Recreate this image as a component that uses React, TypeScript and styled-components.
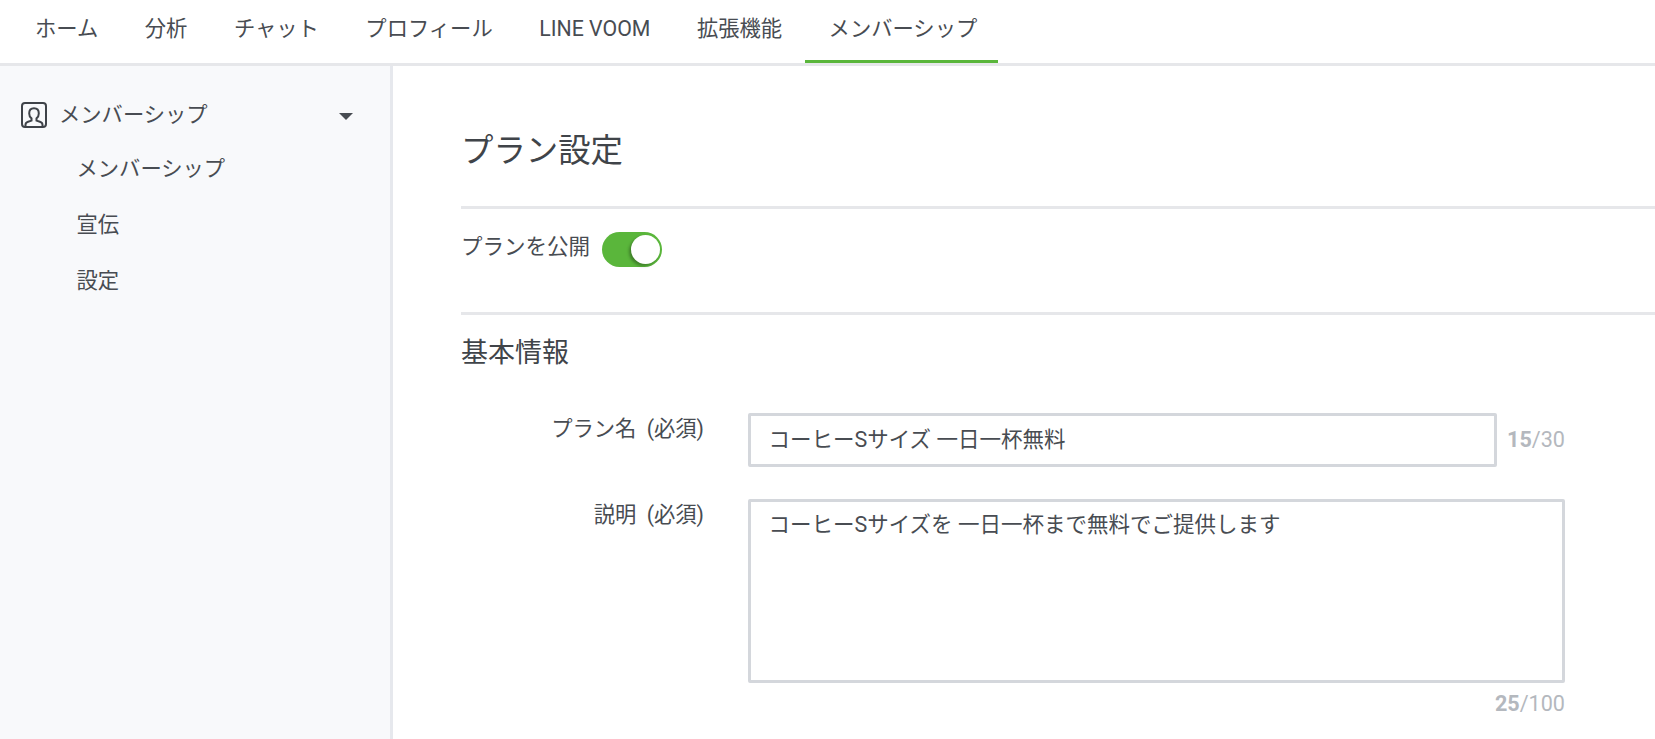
import styled, { createGlobalStyle } from 'styled-components';

const Colors = {
	text: '#484c52',
	heading: '#404449',
	border: '#e6e7ea',
	sideBorder: '#e6e8ed',
	field: '#d4d7dc',
	counter: '#b4b8be',
	green: '#5ab63b',
	sidebar: '#f8f9fb',
};

const GlobalStyle = createGlobalStyle`
	html, body {
		margin: 0;
		padding: 0;
		height: 100%;
		background: #fff;
		overflow: hidden;
	}
	body {
		font-family: Roboto, "Noto Sans CJK JP", sans-serif;
		color: ${Colors.text};
	}
`;

const tabs = ['ホーム', '分析', 'チャット', 'プロフィール', 'LINE VOOM', '拡張機能', 'メンバーシップ'];

export default function App() {
	return (
		<Page>
			<GlobalStyle />
			<TopNav>
				{tabs.map((tab, i) => (
					<Tab key={tab} $active={i === tabs.length - 1}>
						{tab}
					</Tab>
				))}
			</TopNav>
			<Body>
				<Sidebar>
					<SideHeader>
						<svg width="26" height="26" viewBox="0 0 26 26" fill="none" stroke="#3f4349" strokeWidth="2">
							<rect x="1" y="1" width="24" height="24" rx="3" />
							<path d="M4.5 25v-2.200c0-1.600 1-2.600 2.600-3.100l3.400-1.100v-2.200c-1.400-1-2.300-2.700-2.300-4.900 0-3.200 2-5.200 4.800-5.200s4.800 2 4.800 5.200c0 2.200-.9 3.900-2.300 4.900v2.200l3.400 1.100c1.600.5 2.600 1.500 2.600 3.100V25" />
						</svg>
						<SideTitle>メンバーシップ</SideTitle>
						<Caret />
					</SideHeader>
					<SideItem>メンバーシップ</SideItem>
					<SideItem>宣伝</SideItem>
					<SideItem>設定</SideItem>
				</Sidebar>
				<Main>
					<Title>プラン設定</Title>
					<PublishRow>
						<span>プランを公開</span>
						<Toggle />
					</PublishRow>
					<Section>
						<SectionTitle>基本情報</SectionTitle>
						<FieldRow>
							<FieldLabel>プラン名 (必須)</FieldLabel>
							<InputBox>コーヒーSサイズ 一日一杯無料</InputBox>
							<InlineCounter>
								<b>15</b>/30
							</InlineCounter>
						</FieldRow>
						<AreaRow>
							<FieldLabel>説明 (必須)</FieldLabel>
							<div>
								<AreaBox>コーヒーSサイズを 一日一杯まで無料でご提供します</AreaBox>
								<AreaCounter>
									<b>25</b>/100
								</AreaCounter>
							</div>
						</AreaRow>
					</Section>
				</Main>
			</Body>
		</Page>
	);
}

const Page = styled.div`
	height: 739px;
	display: flex;
	flex-direction: column;
	overflow: hidden;
	font-size: 21.3px;
`;

const TopNav = styled.nav`
	flex: none;
	height: 63px;
	box-sizing: content-box;
	padding-left: 11px;
	display: flex;
	border-bottom: 3px solid ${Colors.border};
`;

const Tab = styled.div<{ $active?: boolean }>`
	height: 63px;
	box-sizing: border-box;
	padding: 9px ${(p) => (p.$active ? '20.5px' : '22.5px')} 0 24px;
	line-height: 40px;
	white-space: nowrap;
	border-bottom: 3px solid ${(p) => (p.$active ? Colors.green : 'transparent')};
`;

const Body = styled.div`
	flex: 1;
	display: flex;
	min-height: 0;
`;

const Sidebar = styled.aside`
	flex: none;
	width: 393px;
	box-sizing: border-box;
	padding: 34px 0 0 21px;
	background: ${Colors.sidebar};
	border-right: 3px solid ${Colors.sideBorder};
`;

const SideHeader = styled.div`
	display: flex;
	align-items: center;
	height: 30px;
	margin-bottom: 19px;
`;

const SideTitle = styled.span`
	margin-left: 12px;
	line-height: 30px;
`;

const Caret = styled.i`
	margin: 2px 37px 0 auto;
	width: 0;
	height: 0;
	border-left: 7.5px solid transparent;
	border-right: 7.5px solid transparent;
	border-top: 7.5px solid ${Colors.text};
`;

const SideItem = styled.div`
	padding-left: 55.5px;
	height: 56px;
	line-height: 40px;
`;

const Main = styled.main`
	flex: 1;
	min-width: 0;
	padding-left: 68px;
`;

const Title = styled.h1`
	margin: 0;
	height: 143px;
	box-sizing: border-box;
	padding-top: 63px;
	font-size: 32.4px;
	font-weight: 400;
	line-height: 44px;
	color: ${Colors.heading};
	border-bottom: 3px solid ${Colors.border};
`;

const PublishRow = styled.div`
	height: 106px;
	box-sizing: border-box;
	padding-top: 22px;
	display: flex;
	align-items: flex-start;
	gap: 12px;
	line-height: 32px;
	border-bottom: 3px solid ${Colors.border};

	span {
		font-size: 21.5px;
	}
`;

const Toggle = styled.div`
	position: relative;
	width: 60px;
	height: 35px;
	margin-top: 1px;
	border-radius: 18px;
	background: ${Colors.green};

	&::after {
		content: '';
		position: absolute;
		top: 3px;
		right: 2px;
		width: 29px;
		height: 29px;
		border-radius: 50%;
		background: #fff;
		box-shadow: -2px 2px 3px rgba(0, 0, 0, 0.3);
	}
`;

const Section = styled.section`
	padding-top: 18px;
`;

const SectionTitle = styled.h2`
	margin: 0 0 40px;
	font-size: 27px;
	font-weight: 400;
	line-height: 40px;
	color: ${Colors.heading};
`;

const FieldRow = styled.div`
	display: flex;
	align-items: flex-start;
`;

const AreaRow = styled(FieldRow)`
	margin-top: 32px;
`;

const FieldLabel = styled.div`
	width: 243px;
	flex: none;
	margin-right: 44px;
	padding-top: 1px;
	text-align: right;
	line-height: 30px;
	white-space: pre;
	word-spacing: 5px;
`;

const InputBox = styled.div`
	width: 749px;
	height: 54px;
	box-sizing: border-box;
	padding: 0 17.5px;
	font-size: 21.5px;
	border: 3px solid ${Colors.field};
	border-radius: 2px;
	line-height: 48px;
`;

const InlineCounter = styled.div`
	margin-left: 10px;
	font-size: 21.6px;
	line-height: 54px;
	color: ${Colors.counter};

	b {
		font-weight: 700;
	}
`;

const AreaBox = styled.div`
	width: 817px;
	height: 184px;
	box-sizing: border-box;
	padding: 5px 17.5px;
	font-size: 21.5px;
	border: 3px solid ${Colors.field};
	border-radius: 2px;
	line-height: 36px;
`;

const AreaCounter = styled(InlineCounter)`
	margin: 6px 0 0;
	line-height: 30px;
	text-align: right;
`;
